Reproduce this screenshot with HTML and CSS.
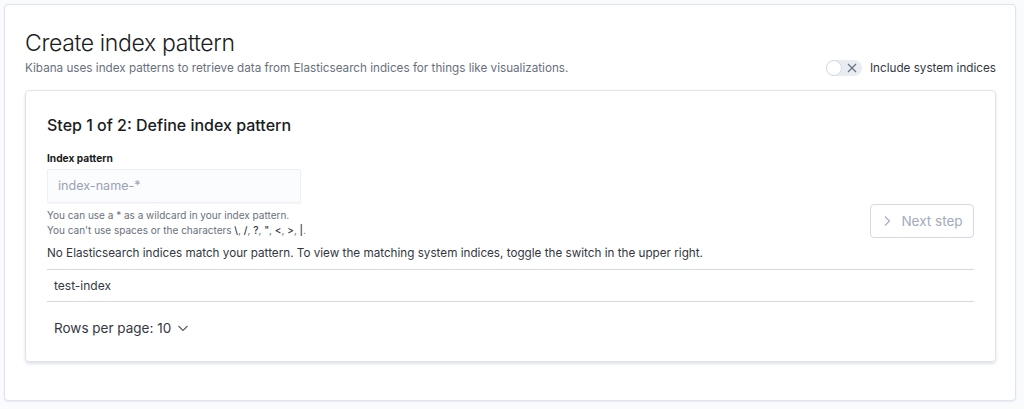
FILE: index.html
```html
<!DOCTYPE html>
<html>
<head>
<meta charset="utf-8">
<link rel="stylesheet" href="styles.css">
</head>
<body>
<div class="page">
  <div class="panel">
    <div class="header">
      <div class="header-text">
        <h1 class="title">Create index pattern</h1>
        <p class="subtitle">Kibana uses index patterns to retrieve data from Elasticsearch indices for things like visualizations.</p>
      </div>
      <div class="toggle">
        <span class="switch">
          <span class="thumb"></span>
          <svg class="xicon" width="10" height="10" viewBox="0 0 10 10"><path d="M1 1L9 9M9 1L1 9" stroke="#69707d" stroke-width="1.2" fill="none"/></svg>
        </span>
        <span class="toggle-label">Include system indices</span>
      </div>
    </div>
    <div class="card">
      <h2 class="step">Step 1 of 2: Define index pattern</h2>
      <div class="form-row">
        <div class="field">
          <label class="label">Index pattern</label>
          <div class="input">index-name-*</div>
          <div class="help">You can use a * as a wildcard in your index pattern.<br>You can't use spaces or the characters <b>\</b>, <b>/</b>, <b>?</b>, <b>"</b>, <b>&lt;</b>, <b>&gt;</b>, <b>|</b>.</div>
        </div>
        <div class="btn">
          <svg width="12" height="12" viewBox="0 0 12 12"><path d="M4 1.5L8.5 6L4 10.5" stroke="#a2abba" stroke-width="1.1" fill="none"/></svg>
          <span>Next step</span>
        </div>
      </div>
      <p class="notice">No Elasticsearch indices match your pattern. To view the matching system indices, toggle the switch in the upper right.</p>
      <div class="table">
        <div class="row">test-index</div>
      </div>
      <div class="pager">
        <span>Rows per page: 10</span>
        <svg width="12" height="12" viewBox="0 0 12 12"><path d="M1.5 4L6 8.5L10.5 4" stroke="#535966" stroke-width="1.1" fill="none"/></svg>
      </div>
    </div>
  </div>
</div>
</body>
</html>
```

FILE: styles.css
```css
* { box-sizing: border-box; }
html, body { margin: 0; padding: 0; }
body {
  background: #fafbfd;
  font-family: Inter, "Noto Sans", sans-serif;
  color: #343741;
  width: 1024px;
  height: 409px;
  overflow: hidden;
}
.page { padding: 4px 8px 0 4px; }
.panel {
  background: #fff;
  border: 1px solid #dfe3ef;
  border-radius: 4px;
  box-shadow: 0 1px 2px rgba(152,162,179,0.15);
  padding: 24px 19px 37px 20px;
  height: 397px;
}
.header { display: flex; align-items: flex-end; justify-content: space-between; }
.title { margin: 0; font-size: 23px; font-weight: 300; line-height: 28px; color: #1a1c21; letter-spacing: -0.35px; }
.subtitle { margin: 3px 0 0; font-size: 11.7px; line-height: 16px; color: #69707d; }
.toggle { display: flex; align-items: center; gap: 8px; }
.switch {
  position: relative;
  width: 36px; height: 16px;
  background: #e9edf3;
  border-radius: 8px;
  display: inline-block;
}
.thumb {
  position: absolute; left: 0; top: 0;
  width: 16px; height: 16px;
  border-radius: 50%;
  background: #fff;
  border: 1px solid #d3dae6;
}
.xicon { position: absolute; left: 21px; top: 3px; }
.toggle-label { font-size: 11.7px; line-height: 16px; color: #343741; }
.card {
  margin-top: 14px;
  border: 1px solid #dfe3ef;
  border-radius: 4px;
  box-shadow: 0 2px 3px rgba(152,162,179,0.3);
  padding: 21px 21px 23px 21px;
}
.step { margin: 0; font-size: 16px; font-weight: 500; line-height: 26px; color: #1a1c21; }
.form-row { display: flex; justify-content: space-between; align-items: flex-end; margin-top: 13px; }
.label { display: block; font-size: 10.2px; font-weight: 700; color: #1a1c21; line-height: 14px; }
.input {
  margin-top: 4px;
  width: 254px; height: 34px;
  background: #fbfcfd;
  border: 1px solid #eef0f4;
  border-radius: 2px;
  box-shadow: 0 1px 1px rgba(152,162,179,0.1);
  font-size: 12.6px;
  color: #98a2b3;
  padding: 7px 10px;
  line-height: 18px;
}
.help { margin-top: 5px; font-size: 10px; line-height: 15px; color: #69707d; }
.help b { color: #343741; font-weight: 500; }
.btn {
  width: 104px; height: 34px;
  border: 1px solid #d3dae6;
  border-radius: 4px;
  display: flex; align-items: center; justify-content: center; gap: 8px;
  font-size: 13.5px; color: #a2abba;
}
.notice { margin: 7px 0 0; font-size: 11.7px; line-height: 16px; color: #343741; }
.table { margin-top: 8px; border-top: 1px solid #d3dae6; border-bottom: 1px solid #d3dae6; }
.row { font-size: 12px; padding: 7px 7px; line-height: 17px; color: #343741; }
.pager { display: flex; align-items: center; gap: 6px; padding: 16px 0 0 7px; font-size: 13.5px; color: #343741; line-height: 20px; }
```
